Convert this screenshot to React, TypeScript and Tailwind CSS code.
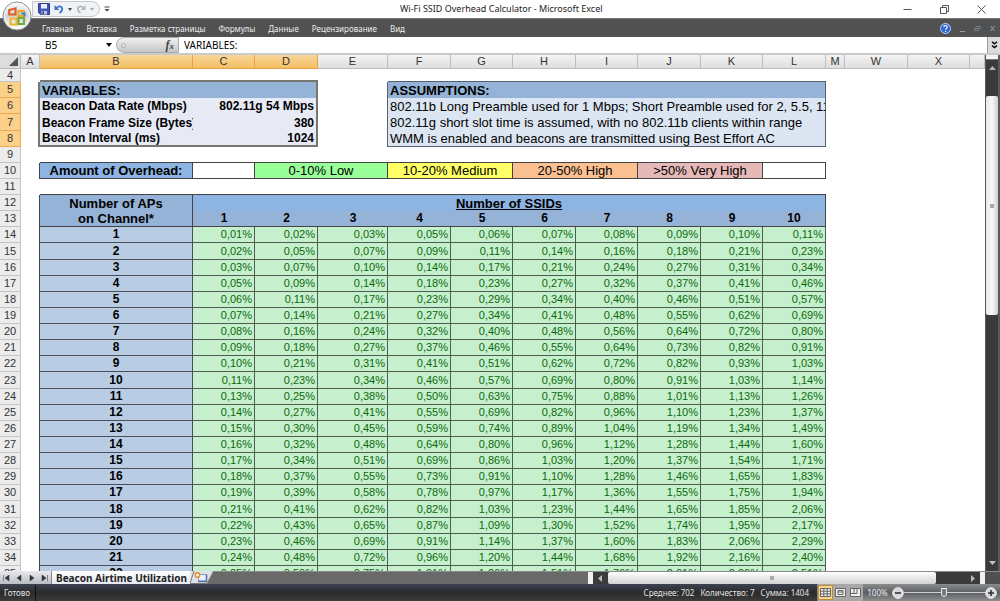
import { Fragment } from 'react';

const MENU = ['Главная', 'Вставка', 'Разметка страницы', 'Формулы', 'Данные', 'Рецензирование', 'Вид'];

const COLUMNS = [
  { name: 'A', width: 'w-[19px]' },
  { name: 'B', width: 'w-[153px]', selected: true },
  { name: 'C', width: 'w-[62px]', selected: true },
  { name: 'D', width: 'w-[63px]', selected: true },
  { name: 'E', width: 'w-[70px]' },
  { name: 'F', width: 'w-[63px]' },
  { name: 'G', width: 'w-[62px]' },
  { name: 'H', width: 'w-[63px]' },
  { name: 'I', width: 'w-[62px]' },
  { name: 'J', width: 'w-[63px]' },
  { name: 'K', width: 'w-[62px]' },
  { name: 'L', width: 'w-[63px]' },
  { name: 'M', width: 'w-[19px]' },
  { name: 'W', width: 'w-[63px]' },
  { name: 'X', width: 'w-[62px]' },
  { name: '', width: 'w-auto' },
];

const SSIDS = [1, 2, 3, 4, 5, 6, 7, 8, 9, 10];
const ACCESS_POINTS = Array.from({ length: 22 }, (_, i) => i + 1);

// share of airtime one beacon takes, in percent
const BEACON_OVERHEAD = 117 / 10240;

function overhead(aps: number, ssids: number): string {
  return `${(aps * ssids * BEACON_OVERHEAD).toFixed(2).replace('.', ',')}%`;
}

interface SheetRowProps {
  number: number;
  selected?: boolean;
  children?: React.ReactNode;
}

function SheetRow({ number, selected, children }: SheetRowProps): React.ReactElement {
  const height = number === 4 ? 'h-[13px] leading-3' : number % 8 === 7 ? 'h-[17px] leading-4' : 'h-4 leading-[15px]';

  return (
    <tr className={height}>
      <th
        scope="row"
        className={`border-b border-r p-0 text-[11px] font-normal text-[#333] ${
          selected ? 'border-[#eda95a] bg-[#fbd18a]' : 'border-[#c3c5c8] bg-[#ececec]'
        }`}
      >
        {number}
      </th>
      {children}
    </tr>
  );
}

function OfficeButton(): React.ReactElement {
  return (
    <button type="button" aria-label="Office" className="absolute left-0.5 top-px size-[30px]">
      <svg viewBox="0 0 30 30" className="size-full">
        <defs>
          <linearGradient id="orb" x1="0" y1="0" x2="0" y2="1">
            <stop offset="0" stopColor="#fdfdfd" />
            <stop offset="0.5" stopColor="#d2d4d8" />
            <stop offset="1" stopColor="#ffffff" />
          </linearGradient>
        </defs>
        <circle cx="15" cy="15" r="14" fill="url(#orb)" stroke="#8d9096" />
        <circle cx="15" cy="15" r="12.6" fill="none" stroke="#fff" strokeOpacity=".8" />
        <g fill="none" strokeWidth="2.200">
          <path d="M13.500 13.500H7.200V9l6.300-1.500z" stroke="#e0602c" />
          <path d="M16.500 10h5.500v5h-5.500z" stroke="#f0a628" />
          <path d="M8.500 17.500h6v6h-6z" stroke="#efb52c" />
          <path d="M16.500 17h5.500v6h-5.500z" stroke="#6fae3c" />
          <path d="M19 12.500h3.500v3" stroke="#4487c9" />
        </g>
      </svg>
    </button>
  );
}

function TitleBar(): React.ReactElement {
  return (
    <header className="flex h-[18px] items-center bg-white">
      <div className="flex w-[400px] items-center pl-8">
        <div className="flex h-4 w-[68px] items-center gap-1 rounded-r-full border border-[#c3c7cf] bg-[#f1f2f5] pl-[5px]">
          <button type="button" aria-label="Сохранить">
            <svg viewBox="0 0 12 12" className="size-3">
              <path d="M.5.5h11v11h-9l-2-2z" fill="#4456b8" stroke="#2d3c8f" />
              <path d="M3 1h6v4.500H3z" fill="#e9eefb" />
              <path d="M3.500 8h5.500v3.500H3.500z" fill="#b9c3e6" />
              <path d="M4.500 8.500h1.500v2.500H4.500z" fill="#27357f" />
            </svg>
          </button>
          <button type="button" aria-label="Отменить" className="flex items-center gap-1">
            <svg viewBox="0 0 10 10" className="size-2.5">
              <path d="M2.500 4C5 1 9 2.500 8 6c-.3 1.300-1.200 2.200-2.500 3" fill="none" stroke="#3c74cf" strokeWidth="1.800" />
              <path d="M.5 1v5h5z" fill="#3c74cf" />
            </svg>
            <svg viewBox="0 0 4 3" className="h-[3px] w-1">
              <path d="M0 0h4L2 3z" fill="#444" />
            </svg>
          </button>
          <button type="button" aria-label="Вернуть" className="flex items-center gap-1">
            <svg viewBox="0 0 10 10" className="size-2.5">
              <path d="M7.500 4C5 1 1 2.500 2 6c.3 1.300 1.200 2.200 2.500 3" fill="none" stroke="#b4b9c2" strokeWidth="1.800" />
              <path d="M9.500 1v5h-5z" fill="#b4b9c2" />
            </svg>
            <svg viewBox="0 0 4 3" className="h-[3px] w-1">
              <path d="M0 0h4L2 3z" fill="#aaa" />
            </svg>
          </button>
        </div>
        <button type="button" aria-label="Настройка панели" className="ml-1">
          <svg viewBox="0 0 6 6" className="size-1.5">
            <path d="M.5 1h5" stroke="#444" />
            <path d="M.5 3h5L3 5.500z" fill="#444" />
          </svg>
        </button>
      </div>
      <h1 className="whitespace-nowrap text-[9px] leading-[18px] text-[#222]">
        Wi-Fi SSID Overhead Calculator - Microsoft Excel
      </h1>
      <div className="ml-auto flex items-center gap-7 pr-[14px]">
        <button type="button" aria-label="Свернуть">
          <svg viewBox="0 0 9 9" className="size-[9px]">
            <path d="M.5 4.500h8" stroke="#555" />
          </svg>
        </button>
        <button type="button" aria-label="Развернуть">
          <svg viewBox="0 0 9 9" className="size-[9px]" fill="none" stroke="#555">
            <path d="M.5 2.500h6v6h-6zM2.500 2V.5h6v6H7" />
          </svg>
        </button>
        <button type="button" aria-label="Закрыть">
          <svg viewBox="0 0 9 9" className="size-[9px]">
            <path d="M.5.5l8 8m0-8l-8 8" stroke="#555" />
          </svg>
        </button>
      </div>
    </header>
  );
}

function MenuBar(): React.ReactElement {
  return (
    <nav className="flex h-[19px] items-center border-t border-[#777] bg-[#515151] pl-[42px]">
      <div className="flex gap-[13px]">
        {MENU.map((item) => (
          <button key={item} type="button" className="whitespace-nowrap pt-0.5 text-[8px] leading-4 text-[#ededed]">
            {item}
          </button>
        ))}
      </div>
      <div className="ml-auto flex items-center gap-2 pr-1">
        <button type="button" aria-label="Справка">
          <svg viewBox="0 0 11 11" className="size-[11px]">
            <circle cx="5.500" cy="5.500" r="5" fill="#2d66d2" stroke="#b9d2fa" />
            <path d="M3.800 4.200c0-2.300 3.500-2.200 3.400-.1 0 1.300-1.600 1.300-1.600 2.700M5.600 7.800v1.100" fill="none" stroke="#fff" strokeWidth="1.200" />
          </svg>
        </button>
        <button type="button" aria-label="Свернуть окно">
          <svg viewBox="0 0 7 7" className="size-[7px]">
            <path d="M1 6.500h5" stroke="#8f9aab" />
          </svg>
        </button>
        <button type="button" aria-label="Восстановить окно">
          <svg viewBox="0 0 7 7" className="size-[7px]" fill="none" stroke="#74808f">
            <path d="M.5 3.500h4v2h-4zM2 2.500v-1h4.500v2H5" />
          </svg>
        </button>
        <button type="button" aria-label="Закрыть окно">
          <svg viewBox="0 0 7 7" className="size-[7px]">
            <path d="M1.500 1l4 5m0-5l-4 5" stroke="#9aa6b6" />
          </svg>
        </button>
      </div>
    </nav>
  );
}

function FormulaBar(): React.ReactElement {
  return (
    <div className="flex h-[18px] border-b-2 border-[#c9cacc] bg-white text-[10px] leading-4 text-black">
      <input aria-label="Имя" defaultValue="B5" className="w-[102px] text-center outline-none" />
      <button type="button" aria-label="Список имён" className="flex w-[14px] items-center justify-center">
        <svg viewBox="0 0 6 4" className="h-1 w-1.5">
          <path d="M0 0h6L3 4z" fill="#111" />
        </svg>
      </button>
      <div className="flex w-[63px] items-center justify-between rounded-l-full border border-[#a9abae] bg-linear-to-b from-[#f0f0f0] to-[#c6c6c6] pl-1 pr-1">
        <span className="size-[5px] rounded-full border border-[#a5a9b0] bg-[#e4e8ee]" />
        <button type="button" className="font-['Liberation_Serif',serif] text-[12px] font-bold italic leading-3 text-[#444]">
          f<span className="text-[9px]">x</span>
        </button>
      </div>
      <input aria-label="Строка формул" defaultValue="VARIABLES:" className="min-w-0 flex-1 pl-[5px] outline-none" />
      <button
        type="button"
        aria-label="Развернуть строку формул"
        className="flex w-[13px] items-center justify-center border-l border-[#999] bg-[#dcdcdc]"
      >
        <svg viewBox="0 0 7 8" className="h-2 w-[7px]" fill="none" stroke="#111" strokeWidth="1.500">
          <path d="M1 .8l2.500 2L6 .8M1 4.600l2.500 2L6 4.600" />
        </svg>
      </button>
    </div>
  );
}

function VariableRow({ label, value, last }: { label: string; value: string; last?: boolean }): React.ReactElement {
  const edge = last ? 'border-b-2 leading-[14px]' : '';

  return (
    <>
      <td className="border-r-2 border-[#77776f]" />
      <td className={`overflow-hidden border-[#77776f] bg-[#e7eaf5] pl-0.5 text-[12px] font-bold ${edge}`}>{label}</td>
      <td
        colSpan={2}
        className={`border-r-2 border-[#77776f] bg-[#e7eaf5] pr-0.5 text-right text-[12px] font-bold ${edge}`}
      >
        {value}
      </td>
    </>
  );
}

function AssumptionCell({ children, last }: { children: string; last?: boolean }): React.ReactElement {
  return (
    <>
      <td className="border-r border-[#56616f]" />
      <td
        colSpan={7}
        className={`overflow-hidden border-r border-[#56616f] bg-[#dce6f2] pl-0.5 ${last ? 'border-b' : ''}`}
      >
        {children}
      </td>
    </>
  );
}

function Worksheet(): React.ReactElement {
  return (
    <div className="min-w-0 flex-1 overflow-hidden bg-white">
      <table className="w-full table-fixed border-separate border-spacing-0 whitespace-nowrap font-['Liberation_Sans',Arial,sans-serif] text-[13px] text-black [&_td]:py-0">
        <colgroup>
          <col className="w-[21px]" />
          {COLUMNS.map((column) => (
            <col key={column.name} className={column.width} />
          ))}
        </colgroup>
        <thead>
          <tr className="h-[14px] leading-[13px]">
            <td className="border-b border-r border-[#b9bbbe] bg-[#dcdddf] px-0.5">
              <svg viewBox="0 0 9 9" className="ml-auto size-[9px]">
                <path d="M9 0v9H0z" fill="#555" />
              </svg>
            </td>
            {COLUMNS.map((column) => (
              <th
                key={column.name}
                scope="col"
                className={`border-b border-r p-0 text-[11px] font-normal text-[#333] ${
                  column.selected
                    ? 'border-[#eda04a] bg-linear-to-b from-[#f9d699] to-[#f3bf62]'
                    : 'border-[#bcbec1] bg-linear-to-b from-[#f4f4f4] to-[#dedede]'
                }`}
              >
                {column.name}
              </th>
            ))}
          </tr>
        </thead>
        <tbody>
          <SheetRow number={4}>
            <td />
            <td colSpan={3} className="border-b-2 border-[#77776f]" />
            <td />
            <td colSpan={7} className="border-b border-[#56616f]" />
          </SheetRow>
          <SheetRow number={5} selected>
            <td className="border-r-2 border-[#77776f]" />
            <td colSpan={3} className="border-r-2 border-[#77776f] bg-[#95b3d7] pl-0.5 font-bold">
              VARIABLES:
            </td>
            <td className="border-r border-[#56616f]" />
            <td colSpan={7} className="border-r border-[#56616f] bg-[#95b3d7] pl-0.5 font-bold">
              ASSUMPTIONS:
            </td>
          </SheetRow>
          <SheetRow number={6} selected>
            <VariableRow label="Beacon Data Rate (Mbps)" value="802.11g 54 Mbps" />
            <AssumptionCell>802.11b Long Preamble used for 1 Mbps; Short Preamble used for 2, 5.5, 11 Mbps</AssumptionCell>
          </SheetRow>
          <SheetRow number={7} selected>
            <VariableRow label="Beacon Frame Size (Bytes)" value="380" />
            <AssumptionCell>802.11g short slot time is assumed, with no 802.11b clients within range</AssumptionCell>
          </SheetRow>
          <SheetRow number={8} selected>
            <VariableRow label="Beacon Interval (ms)" value="1024" last />
            <AssumptionCell last>WMM is enabled and beacons are transmitted using Best Effort AC</AssumptionCell>
          </SheetRow>
          <SheetRow number={9}>
            <td />
            <td colSpan={11} className="border-b border-[#444]" />
          </SheetRow>
          <SheetRow number={10}>
            <td className="border-r border-[#444]" />
            <td className="border-b border-r border-[#444] bg-[#8db4e2] text-center font-bold">Amount of Overhead:</td>
            <td className="border-b border-r border-[#444]" />
            <td colSpan={2} className="border-b border-r border-[#444] bg-[#99ff99] text-center">0-10% Low</td>
            <td colSpan={2} className="border-b border-r border-[#444] bg-[#ffff66] text-center">10-20% Medium</td>
            <td colSpan={2} className="border-b border-r border-[#444] bg-[#fac090] text-center">20-50% High</td>
            <td colSpan={2} className="border-b border-r border-[#444] bg-[#e6b9b8] text-center">&gt;50% Very High</td>
            <td className="border-b border-r border-[#444]" />
          </SheetRow>
          <SheetRow number={11}>
            <td />
            <td colSpan={11} className="border-b border-[#444]" />
          </SheetRow>
          <SheetRow number={12}>
            <td className="border-r border-[#444]" />
            <th scope="col" rowSpan={2} className="border-b border-r border-[#444] bg-[#95b3d7] p-0">
              Number of APs
              <br />
              on Channel*
            </th>
            <th scope="colgroup" colSpan={10} className="border-r border-[#444] bg-[#8db4e2] p-0 underline">
              Number of SSIDs
            </th>
          </SheetRow>
          <SheetRow number={13}>
            <td className="border-r border-[#444]" />
            {SSIDS.map((count) => (
              <th
                key={count}
                scope="col"
                className="border-b border-[#444] bg-[#95b3d7] p-0 text-[12px] last:border-r"
              >
                {count}
              </th>
            ))}
          </SheetRow>
          {ACCESS_POINTS.map((aps) => (
            <SheetRow key={aps} number={aps + 13}>
              <td className="border-r border-[#444]" />
              <th scope="row" className="border-b border-r border-[#4a4f57] bg-[#b8cce4] p-0 text-[12px]">
                {aps}
              </th>
              {SSIDS.map((count) => (
                <td
                  key={count}
                  className="border-b border-r border-[#4c5f4e] bg-[#c6efce] pr-0.5 text-right text-[11px] text-[#0a6a0a]"
                >
                  {overhead(aps, count)}
                </td>
              ))}
            </SheetRow>
          ))}
        </tbody>
      </table>
    </div>
  );
}

function VerticalScroll(): React.ReactElement {
  return (
    <div className="flex w-[15px] flex-col border-l border-r-2 border-[#5a5a5a] bg-[#3b3b3b]">
      <div className="h-[5px] border-b border-[#777] bg-[#f4f4f4]" />
      <button type="button" aria-label="Вверх" className="flex h-9 justify-center pt-1.5">
        <svg viewBox="0 0 7 4" className="h-1 w-[7px]">
          <path d="M0 4h7L3.500 0z" fill="#b5b5b5" />
        </svg>
      </button>
      <div className="flex basis-[219px] items-center justify-center rounded-xs bg-linear-to-r from-[#e9e9e9] via-[#f8f8f8] to-[#cfcfcf]">
        <span className="size-1 bg-[#aaa]" />
      </div>
      <button type="button" aria-label="Вниз" className="mt-auto flex justify-center pb-1.5">
        <svg viewBox="0 0 7 4" className="h-1 w-[7px]">
          <path d="M0 0h7L3.500 4z" fill="#c5c5c5" />
        </svg>
      </button>
    </div>
  );
}

const SHEET_NAV = [
  { label: 'Первый лист', path: 'M1.500 1v6M7 1v6L3 4z' },
  { label: 'Предыдущий лист', path: 'M6 1v6L2 4z' },
  { label: 'Следующий лист', path: 'M2 1v6l4-3z' },
  { label: 'Последний лист', path: 'M6.500 1v6M1 1v6l4-3z' },
];

function SheetTabs(): React.ReactElement {
  return (
    <div className="flex h-[13px] bg-[#696969]">
      <div className="flex w-[51px] items-center justify-around bg-linear-to-b from-[#e8eaed] to-[#b9bdc4]">
        {SHEET_NAV.map((item) => (
          <button key={item.label} type="button" aria-label={item.label}>
            <svg viewBox="0 0 8 8" className="size-2">
              <path d={item.path} fill="#333" stroke="#333" strokeWidth=".5" />
            </svg>
          </button>
        ))}
      </div>
      <button
        type="button"
        className="whitespace-nowrap border-l border-[#888] bg-linear-to-b from-white to-[#e4e9f0] pl-1 pr-[3px] text-[10px] font-bold leading-3 text-[#222]"
      >
        Beacon Airtime Utilization
      </button>
      <button type="button" aria-label="Вставить лист">
        <svg viewBox="0 0 24 13" className="h-[13px] w-6">
          <path d="M0 0h24l-7 13H0z" fill="#dfe3e9" />
          <path d="M4 0L0 12.500h17L23.500 0" fill="none" stroke="#777" />
          <path d="M8.500 3.500h8v6.500h-8z" fill="#e8f0fc" stroke="#8ba3cc" />
          <path d="M8 10.500h8.500v-7" fill="none" stroke="#4f6da6" strokeWidth="1.500" />
          <circle cx="7.500" cy="4" r="2.200" fill="#fff" stroke="#e58a28" strokeWidth="1.400" />
        </svg>
      </button>
      <div className="flex min-w-0 flex-1 border-t border-[#8a8a8a]">
        <div className="flex-[375_1_0%]" />
        <div className="w-[5px] bg-[#f0f0f0]" />
        <div className="flex flex-[389_1_0%] bg-[#3b3b3b]">
          <button type="button" aria-label="Влево" className="flex w-[15px] items-center justify-center">
            <svg viewBox="0 0 4 7" className="h-[7px] w-1">
              <path d="M4 0v7L0 3.500z" fill="#bbb" />
            </svg>
          </button>
          <div className="flex flex-1 items-center justify-center rounded-xs bg-linear-to-b from-white to-[#d2d2d2]">
            <span className="size-1 bg-[#aaa]" />
          </div>
          <button type="button" aria-label="Вправо" className="flex w-11 items-center justify-end pr-[5px]">
            <svg viewBox="0 0 4 7" className="h-[7px] w-1">
              <path d="M0 0v7l4-3.500z" fill="#bbb" />
            </svg>
          </button>
        </div>
        <div className="w-[5px] bg-[#f0f0f0]" />
        <div className="w-[15px] bg-[#505050]" />
      </div>
    </div>
  );
}

const VIEWS = [
  { label: 'Обычный', path: 'M.5.5h10v8H.5zM.5 3.200h10M.5 5.900h10M3.800.5v8M7.200.5v8', active: true },
  { label: 'Разметка', path: 'M.5.5h10v8H.5zM3 2.500h5v4H3zM3 4h5' },
  { label: 'Страничный', path: 'M.5.5h10v8H.5zM4 .5v5M7 .5v5M1 5.500h6' },
];

function ZoomIcon({ path }: { path: string }): React.ReactElement {
  return (
    <svg viewBox="0 0 12 12" className="size-3">
      <circle cx="6" cy="6" r="5.300" fill="#d9d9d9" stroke="#f2f2f2" />
      <path d={path} stroke="#333" strokeWidth="1.600" />
    </svg>
  );
}

function StatusBar(): React.ReactElement {
  const stats = ['Среднее: 702', 'Количество: 7', 'Сумма: 1404'];

  return (
    <footer className="flex h-[17px] items-center bg-linear-to-b from-[#3d4352] via-[#2b2b2d] to-[#3c3c3c] text-[8px] leading-4 text-[#e6e6e6]">
      <span className="w-9 border-r border-[#111] pl-1">Готово</span>
      <div className="ml-auto flex whitespace-nowrap pr-2">
        {stats.map((stat, i) => (
          <Fragment key={stat}>
            {i > 0 && <span className="w-1.5" />}
            <span>{stat}</span>
          </Fragment>
        ))}
      </div>
      <div className="flex h-full w-[183px] items-center border-l border-[#888] bg-linear-to-b from-[#8b8b8b] via-[#5b6066] to-[#8e8e8e]">
        <div className="flex h-full items-center bg-[#a8a8a8]">
          {VIEWS.map((view) => (
            <button
              key={view.label}
              type="button"
              aria-label={view.label}
              className={`flex h-[15px] w-[15px] items-center justify-center border ${
                view.active ? 'border-[#c08a3c] bg-[#fbd68a]' : 'border-transparent'
              }`}
            >
              <svg viewBox="0 0 11 9" className="h-[9px] w-[11px]">
                <path d={view.path} fill="#eee" stroke="#666" />
              </svg>
            </button>
          ))}
        </div>
        <button type="button" className="w-[29px] text-center">100%</button>
        <button type="button" aria-label="Уменьшить">
          <ZoomIcon path="M3 6h6" />
        </button>
        <input
          type="range"
          aria-label="Масштаб"
          min={0}
          max={100}
          defaultValue={49}
          className="h-[11px] min-w-0 flex-1 appearance-none bg-[linear-gradient(#d0d0d0,#d0d0d0)] bg-[length:100%_1px] bg-center bg-no-repeat [&::-webkit-slider-thumb]:h-[9px] [&::-webkit-slider-thumb]:w-[6px] [&::-webkit-slider-thumb]:appearance-none [&::-webkit-slider-thumb]:rounded-b-full [&::-webkit-slider-thumb]:border [&::-webkit-slider-thumb]:border-[#eee] [&::-webkit-slider-thumb]:bg-[#777]"
        />
        <button type="button" aria-label="Увеличить" className="mr-[3px]">
          <ZoomIcon path="M3 6h6M6 3v6" />
        </button>
      </div>
    </footer>
  );
}

export default function App(): React.ReactElement {
  return (
    <div className="relative flex h-screen flex-col overflow-hidden bg-white font-['Noto_Sans','Open_Sans',sans-serif]">
      <TitleBar />
      <MenuBar />
      <FormulaBar />
      <OfficeButton />
      <main className="flex min-h-0 flex-1">
        <Worksheet />
        <VerticalScroll />
      </main>
      <SheetTabs />
      <StatusBar />
    </div>
  );
}
